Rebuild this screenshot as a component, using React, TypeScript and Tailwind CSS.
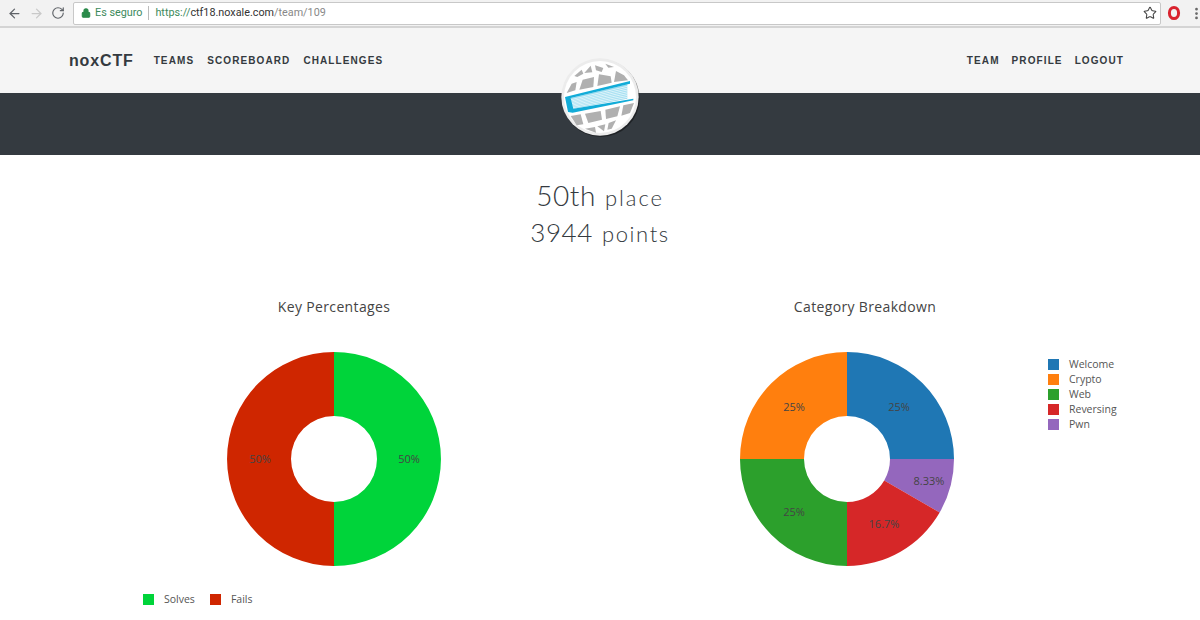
import React from "react";
import { ArrowLeft, ArrowRight, RotateCw, Lock, Star, MoreVertical } from "lucide-react";

type Slice = { from: number; to: number; color: string };
type Label = { x: number; y: number; text: string };

const R = 107;
const HOLE = 43;

// degrees clockwise from 12 o'clock
function point(deg: number, r: number) {
  const a = (deg * Math.PI) / 180;
  return `${(110 + r * Math.sin(a)).toFixed(2)} ${(110 - r * Math.cos(a)).toFixed(2)}`;
}

function slicePath(s: Slice) {
  const large = s.to - s.from > 180 ? 1 : 0;
  return `M${point(s.from, R)} A${R} ${R} 0 ${large} 1 ${point(s.to, R)} L${point(s.to, HOLE)} A${HOLE} ${HOLE} 0 ${large} 0 ${point(s.from, HOLE)} Z`;
}

function Donut({ slices, labels }: { slices: Slice[]; labels: Label[] }) {
  return (
    <svg width="220" height="220" viewBox="0 0 220 220" className="block">
      {slices.map((s) => (
        <path key={s.from} d={slicePath(s)} fill={s.color} />
      ))}
      {labels.map((l) => (
        <text key={l.text + l.x} x={l.x} y={l.y} textAnchor="middle" fontSize="11" fill="#444" fontFamily="'Open Sans', sans-serif">
          {l.text}
        </text>
      ))}
    </svg>
  );
}

function Logo() {
  const tiles = [
    "103,77 125,58 130,70 112,80",
    "133,68 152,46 157,66",
    "165,45 190,53 185,65 168,60",
    "196,40 222,50 205,52",
    "80,128 95,100 110,95 106,120",
    "118,118 128,88 162,80 160,110",
    "172,107 177,72 212,78 215,97",
    "222,95 228,62 252,75 264,90",
    "92,197 122,192 130,222 110,225",
    "135,190 182,182 186,208 145,218",
    "196,178 240,168 232,198 198,206",
    "250,165 282,158 270,188 244,196",
    "135,235 165,230 168,247",
    "172,228 196,222 192,243",
    "206,218 228,210 215,235 202,238",
  ];
  return (
    <svg width="80" height="80" viewBox="60 20 240 240" className="block">
      <circle cx="183" cy="144" r="116" fill="#000" opacity="0.4" />
      <circle cx="180" cy="140" r="116" fill="#ececec" />
      <circle cx="180" cy="140" r="108" fill="#fff" />
      {tiles.map((p) => (
        <polygon key={p} points={p} fill="#b0b0b0" />
      ))}
      <polygon points="92,143 262,102 262,145 100,175" fill="#9bdcf0" />
      {[0, 1, 2, 3, 4, 5, 6].map((i) => (
        <path key={i} d={`M${93 + i} ${148 + i * 4}L262 ${108 + i * 5.5}`} stroke="#fff" strokeWidth="2" />
      ))}
      <polygon points="75,140 270,92 270,100 92,143 100,175 280,145 280,150 98,187 84,185" fill="#12acd8" />
    </svg>
  );
}

function Swatch({ color }: { color: string }) {
  return <span className="block w-[11px] h-[11px]" style={{ backgroundColor: color }} />;
}

export default function App() {
  const keySlices: Slice[] = [
    { from: 0, to: 180, color: "#00d43a" },
    { from: 180, to: 360, color: "#cf2600" },
  ];
  const catSlices: Slice[] = [
    { from: 0, to: 90, color: "#1f77b4" },
    { from: 90, to: 120, color: "#9467bd" },
    { from: 120, to: 180, color: "#d62728" },
    { from: 180, to: 270, color: "#2ca02c" },
    { from: 270, to: 360, color: "#ff7f0e" },
  ];
  const legend = [
    ["Welcome", "#1f77b4"],
    ["Crypto", "#ff7f0e"],
    ["Web", "#2ca02c"],
    ["Reversing", "#d62728"],
    ["Pwn", "#9467bd"],
  ];

  return (
    <div className="relative w-[1200px] h-[620px] overflow-hidden bg-white font-['Open_Sans',sans-serif]">
      {/* browser bar */}
      <div className="flex items-center h-[28px] bg-[#f2f2f2] border-b-2 border-[#d4d4d4] font-['Liberation_Sans',sans-serif]">
        <div className="flex shrink-0 items-center w-[73px] pl-[7px] gap-[7px] text-[#5f6368]">
          <ArrowLeft size={15} strokeWidth={2} />
          <ArrowRight size={15} strokeWidth={2} className="text-[#c9c9c9]" />
          <RotateCw size={14} strokeWidth={2} />
        </div>
        <div className="flex shrink-0 items-center w-[1088px] h-[23px] bg-white border border-[#c8c8c8] rounded-[2px] pl-[7px] pr-[3px] text-[10.8px] font-['Roboto',sans-serif]">
          <Lock size={10} strokeWidth={2.5} className="text-[#2a8a4a] fill-[#2a8a4a] mr-[4px]" />
          <span className="text-[#3c8a5c]">Es seguro</span>
          <span className="w-px h-[14px] bg-[#bbb] mx-[6px]" />
          <span className="text-[#3c8a5c]">https://</span>
          <span className="text-[#333]">ctf18.noxale.com</span>
          <span className="text-[#888]">/team/109</span>
          <Star size={14} strokeWidth={1.8} className="ml-auto text-[#444]" />
        </div>
        <svg width="16" height="16" viewBox="0 0 16 16" className="shrink-0 ml-[5px]">
          <ellipse cx="8" cy="8" rx="4.6" ry="5.6" fill="none" stroke="#d9232e" strokeWidth="3" />
        </svg>
        <MoreVertical size={15} strokeWidth={2.4} className="shrink-0 ml-[7px] text-[#666]" />
      </div>

      {/* header */}
      <div className="relative">
        <div className="flex items-center justify-between h-[65px] bg-[#f5f5f5] pl-[69px] pr-[76px] font-['Liberation_Sans',sans-serif] font-bold text-[#343a40]">
          <div className="flex items-center">
            <span className="text-[16px] tracking-[0.85px] mr-[20px]">noxCTF</span>
            <div className="flex gap-[13px] text-[10px] tracking-[1.1px]">
              <span>TEAMS</span>
              <span>SCOREBOARD</span>
              <span>CHALLENGES</span>
            </div>
          </div>
          <div className="flex gap-[12px] text-[10px] tracking-[1.1px]">
            <span>TEAM</span>
            <span>PROFILE</span>
            <span>LOGOUT</span>
          </div>
        </div>
        <div className="h-[62px] bg-[#343a40]" />
        <div className="absolute left-[560px] top-[29px]">
          <Logo />
        </div>
      </div>

      {/* stats */}
      <div className="flex flex-col items-center pt-[22px] font-['Lato',sans-serif] font-light text-[#343a40]">
        <div className="flex items-baseline gap-[9px] h-[37px] leading-[37px]">
          <span className="text-[28px] tracking-[0.6px]">50th</span>
          <span className="text-[22px] tracking-[1.9px]">place</span>
        </div>
        <div className="flex items-baseline gap-[9px] h-[37px] leading-[37px]">
          <span className="text-[26px] tracking-[0.6px]">3944</span>
          <span className="text-[22px] tracking-[1.6px]">points</span>
        </div>
      </div>

      {/* charts */}
      <div className="flex pt-[46px] text-[#444]">
        <div className="flex flex-col w-[600px] pl-[224px]">
          <div className="w-[220px] text-center text-[14px] leading-[20px] tracking-[0.35px]">Key Percentages</div>
          <div className="mt-[32px]">
            <Donut
              slices={keySlices}
              labels={[
                { x: 185, y: 114, text: "50%" },
                { x: 36, y: 114, text: "50%" },
              ]}
            />
          </div>
          <div className="flex items-center -ml-[81px] mt-[23px] text-[10.5px] text-[#555]">
            <Swatch color="#00d43a" />
            <span className="ml-[10px] mr-[15px]">Solves</span>
            <Swatch color="#cf2600" />
            <span className="ml-[10px]">Fails</span>
          </div>
        </div>
        <div className="relative flex flex-col w-[600px] pl-[137px]">
          <div className="w-[256px] text-center text-[14px] leading-[20px] tracking-[0.35px]">Category Breakdown</div>
          <div className="mt-[32px]">
            <Donut
              slices={catSlices}
              labels={[
                { x: 162, y: 62, text: "25%" },
                { x: 57, y: 62, text: "25%" },
                { x: 57, y: 167, text: "25%" },
                { x: 147, y: 179, text: "16.7%" },
                { x: 192, y: 136, text: "8.33%" },
              ]}
            />
          </div>
          <div className="absolute left-[448px] top-[62px] flex flex-col gap-[4px] text-[10.5px] leading-[11px] text-[#555]">
            {legend.map(([name, color]) => (
              <div key={name} className="flex items-center">
                <Swatch color={color} />
                <span className="ml-[10px]">{name}</span>
              </div>
            ))}
          </div>
        </div>
      </div>
    </div>
  );
}
